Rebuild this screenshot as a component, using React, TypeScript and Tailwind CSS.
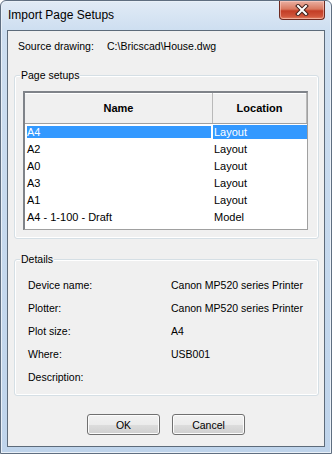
import React from "react";

const ROWS: [string, string][] = [
  ["A4", "Layout"],
  ["A2", "Layout"],
  ["A0", "Layout"],
  ["A3", "Layout"],
  ["A1", "Layout"],
  ["A4 - 1-100 - Draft", "Model"],
];

const DETAILS: [string, string][] = [
  ["Device name:", "Canon MP520 series Printer"],
  ["Plotter:", "Canon MP520 series Printer"],
  ["Plot size:", "A4"],
  ["Where:", "USB001"],
  ["Description:", ""],
];

function CloseButton() {
  return (
    <div className="flex h-[19px] w-[46px] items-center justify-center rounded-b-[4px] border border-t-0 border-[#6e2a20] bg-[linear-gradient(to_bottom,#eab0a2,#d9785f_45%,#c33d26_55%,#d0553b_85%,#e58566)] shadow-[inset_0_0_0_1px_rgba(255,210,200,0.55)]">
      <svg width="14" height="12" viewBox="0 0 14 12">
        <path d="M3 2 L11 10 M11 2 L3 10" stroke="#40201b" strokeWidth="4" strokeLinecap="square" fill="none" />
        <path d="M3 2 L11 10 M11 2 L3 10" stroke="#ffffff" strokeWidth="2" strokeLinecap="square" fill="none" />
      </svg>
    </div>
  );
}

function GroupBox({ title, className, children }: { title: string; className?: string; children: React.ReactNode }) {
  return (
    <div
      className={`relative mx-[6px] mr-[5px] rounded-[3px] border border-[#d5dfe5] shadow-[inset_0_0_0_1px_#ffffff] ${className ?? ""}`}
    >
      <span className="absolute left-[5px] top-[-8px] bg-[#f0f0f0] px-[1px] leading-[14px]">{title}</span>
      {children}
    </div>
  );
}

function Button({ label }: { label: string }) {
  return (
    <button className="flex h-[21px] w-[73px] items-center justify-center rounded-[3px] border border-[#707070] bg-[linear-gradient(to_bottom,#f2f2f2,#ebebeb_50%,#dddddd_50%,#cfcfcf)] leading-[14px] text-black shadow-[inset_0_0_0_1px_#fcfcfc]">
      {label}
    </button>
  );
}

export default function App() {
  return (
    <div className="h-[454px] w-[332px] font-['Liberation_Sans',Arial,sans-serif] text-[10.5px] text-black">
      <div className="flex h-full w-full flex-col rounded-t-[6px] border border-[#5f6e80] bg-[linear-gradient(to_bottom,#e1ebf6,#cddef0_30px,#bfd4eb)] shadow-[inset_0_0_0_1px_#e9f0f8]">
        {/* Title bar */}
        <div className="flex h-[29px] pl-[7px] pr-[6px]">
          <span className="pt-[7px] text-[12px] leading-[15px]">Import Page Setups</span>
          <div className="ml-auto">
            <CloseButton />
          </div>
        </div>

        {/* Client area */}
        <div className="mx-[6px] flex h-[417px] flex-col border border-[#5d6b7a] bg-[#f0f0f0]">
          <div className="flex pl-[10px] pt-[8px] leading-[14px]">
            <span className="w-[89px]">Source drawing:</span>
            <span>C:\Bricscad\House.dwg</span>
          </div>

          <GroupBox title="Page setups" className="mt-[22px] pb-[8px] pl-[8px] pr-[10px] pt-[15px]">
            <div className="flex h-[139px] flex-col border-b border-l-2 border-r border-t-2 border-b-[#a0a0a0] border-l-[#7f8389] border-r-[#a0a0a0] border-t-[#7f8389] bg-white text-[11px]">
              <div className="flex h-[31px] border-b border-[#a0a0a0] bg-[#f0f0f0] font-bold shadow-[inset_0_1px_0_#ffffff]">
                <div className="flex w-[188px] items-center justify-center border-r border-[#b9b9b9]">Name</div>
                <div className="flex flex-1 items-center justify-center border-r border-[#b9b9b9]">Location</div>
              </div>
              <div className="flex flex-col">
                {ROWS.map(([name, loc], i) => (
                  <div key={i} className="flex h-[17px] items-start">
                    <div className="w-[188px] pl-[1px] pr-[1px]">
                      <div
                        className={`mt-[1px] h-[14px] border leading-[12px] ${
                          i === 0 ? "border-white bg-[#3399ff] text-white" : "border-transparent"
                        }`}
                      >
                        {name}
                      </div>
                    </div>
                    <div
                      className={`mt-[1px] h-[14px] flex-1 pl-[1px] leading-[14px] ${
                        i === 0 ? "bg-[#3399ff] text-white" : ""
                      }`}
                    >
                      {loc}
                    </div>
                  </div>
                ))}
              </div>
            </div>
          </GroupBox>

          <GroupBox title="Details" className="mt-[20px] flex flex-col gap-[9px] pb-[11px] pl-[13px] pt-[18px]">
            {DETAILS.map(([label, value]) => (
              <div key={label} className="flex h-[14px] leading-[14px]">
                <span className="w-[143px]">{label}</span>
                <span>{value}</span>
              </div>
            ))}
          </GroupBox>

          <div className="mt-[18px] flex justify-center gap-[12px]">
            <Button label="OK" />
            <Button label="Cancel" />
          </div>
        </div>
      </div>
    </div>
  );
}
